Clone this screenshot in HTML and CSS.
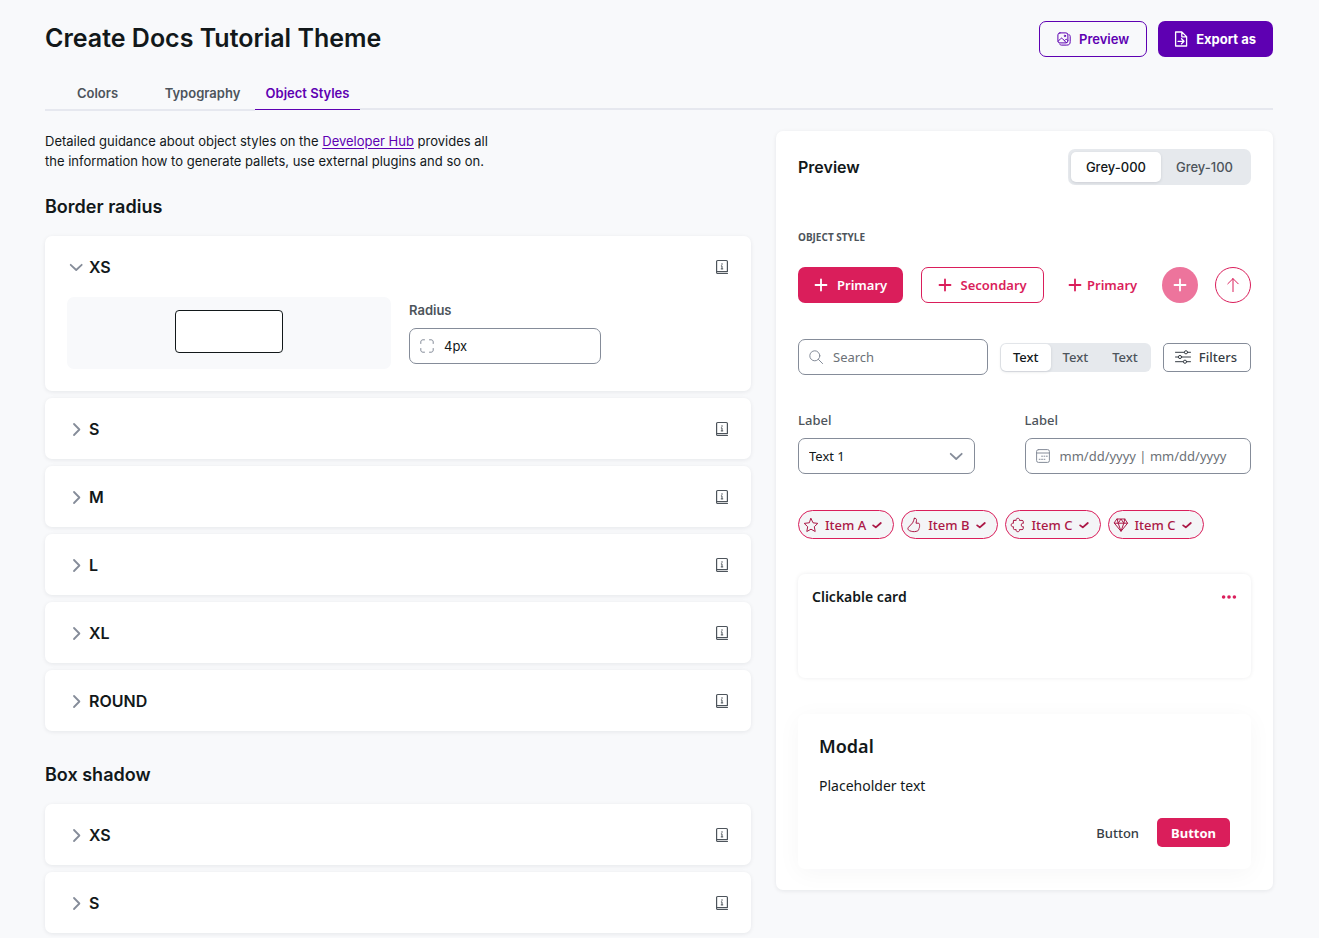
FILE: index.html
```html
<!DOCTYPE html>
<html lang="en">
<head>
<meta charset="utf-8">
<meta name="viewport" content="width=device-width, initial-scale=1">
<title>Create Docs Tutorial Theme</title>
<link rel="stylesheet" href="styles.css">
</head>
<body>
<svg class="sprite" aria-hidden="true">
  <symbol id="chev-right" viewBox="0 0 16 16"><path d="M6 3 11.4 8.5 6 14"/></symbol>
  <symbol id="chev-down" viewBox="0 0 16 16"><path d="M2.7 5.8 8.2 11 13.7 5.8"/></symbol>
  <symbol id="info" viewBox="0 0 18 18"><path d="M3.6 14.4V3.6c0-.7.3-1.1 1.1-1.1h8.6c.8 0 1.1.4 1.1 1.1v9.9M3.6 13.5h10.8M4 15.4h10.4"/><path class="thin" d="M9 5.6v.8M8.3 7.9H9v2.9M8.2 10.9h1.6"/></symbol>
  <symbol id="plus" viewBox="0 0 14 14"><path d="M7 1.5v11M1.5 7h11"/></symbol>
  <symbol id="check" viewBox="0 0 10 8"><path d="M1.2 4.4 3.8 6.4 8.8 2"/></symbol>
</svg>
<div class="page">
  <header class="header">
    <h1 class="title">Create Docs Tutorial Theme</h1>
    <div class="actions">
      <button class="btn btn-outline" type="button">
        <svg class="icon" width="14" height="14" viewBox="0 0 14 14"><rect x=".9" y=".9" width="10" height="10" rx="2"/><path d="M12 2.6c.8.3 1.2.9 1.2 1.8v5.2c0 2.4-1 3.5-3.5 3.5H4.5c-1 0-1.6-.4-1.9-1.1M1.2 9.2l2.6-2.7c.5-.5 1-.5 1.5 0l4 4.2M7.6 8.5l1-.9c.5-.4.9-.4 1.3 0l1 1"/><circle cx="7.9" cy="3.9" r=".7"/></svg>
        Preview
      </button>
      <button class="btn btn-solid" type="button">
        <svg class="icon" width="14" height="16" viewBox="0 0 14 16"><path d="M1.6 1h6.2l4.8 4.6V15h-11zM7.8 1v4.8h4.8M4 10.3h5.8M7.5 7.8l2.5 2.5-2.5 2.5"/></svg>
        Export as
      </button>
    </div>
  </header>

  <div class="tabs" role="tablist">
    <button class="tab" type="button" role="tab" aria-selected="false">Colors</button>
    <button class="tab" type="button" role="tab" aria-selected="false">Typography</button>
    <button class="tab tab-active" type="button" role="tab" aria-selected="true">Object Styles</button>
  </div>

  <main class="layout">
    <div class="settings">
      <p class="intro">Detailed guidance about object styles on the <a href="#">Developer Hub</a> provides all the information how to generate pallets, use external plugins and so on.</p>

      <section class="group">
        <h2 class="group-title">Border radius</h2>
        <div class="stack">
          <article class="panel">
            <div class="panel-head">
              <button class="toggle" type="button" aria-expanded="true"><svg class="icon chevron"><use href="#chev-down"/></svg>XS</button>
              <button class="info" type="button" aria-label="About XS"><svg class="icon"><use href="#info"/></svg></button>
            </div>
            <div class="panel-body">
              <div class="swatch"><div class="swatch-shape"></div></div>
              <div class="field">
                <label class="label" for="radius">Radius</label>
                <div class="input-box radius-box">
                  <svg class="icon" width="14" height="14" viewBox="0 0 14 14"><path d="M.8 4.5V3C.8 1.6 1.6.8 3 .8h1.5M9.5.8H11c1.4 0 2.2.8 2.2 2.2v1.5M13.2 9.5V11c0 1.4-.8 2.2-2.2 2.2H9.5M4.5 13.2H3C1.6 13.2.8 12.4.8 11V9.5"/></svg>
                  <input class="input" id="radius" type="text" value="4px">
                </div>
              </div>
            </div>
          </article>
          <article class="panel"><div class="panel-head">
            <button class="toggle" type="button" aria-expanded="false"><svg class="icon chevron"><use href="#chev-right"/></svg>S</button>
            <button class="info" type="button" aria-label="About S"><svg class="icon"><use href="#info"/></svg></button>
          </div></article>
          <article class="panel"><div class="panel-head">
            <button class="toggle" type="button" aria-expanded="false"><svg class="icon chevron"><use href="#chev-right"/></svg>M</button>
            <button class="info" type="button" aria-label="About M"><svg class="icon"><use href="#info"/></svg></button>
          </div></article>
          <article class="panel"><div class="panel-head">
            <button class="toggle" type="button" aria-expanded="false"><svg class="icon chevron"><use href="#chev-right"/></svg>L</button>
            <button class="info" type="button" aria-label="About L"><svg class="icon"><use href="#info"/></svg></button>
          </div></article>
          <article class="panel"><div class="panel-head">
            <button class="toggle" type="button" aria-expanded="false"><svg class="icon chevron"><use href="#chev-right"/></svg>XL</button>
            <button class="info" type="button" aria-label="About XL"><svg class="icon"><use href="#info"/></svg></button>
          </div></article>
          <article class="panel"><div class="panel-head">
            <button class="toggle" type="button" aria-expanded="false"><svg class="icon chevron"><use href="#chev-right"/></svg>ROUND</button>
            <button class="info" type="button" aria-label="About ROUND"><svg class="icon"><use href="#info"/></svg></button>
          </div></article>
        </div>
      </section>

      <section class="group group-next">
        <h2 class="group-title">Box shadow</h2>
        <div class="stack">
          <article class="panel"><div class="panel-head">
            <button class="toggle" type="button" aria-expanded="false"><svg class="icon chevron"><use href="#chev-right"/></svg>XS</button>
            <button class="info" type="button" aria-label="About XS shadow"><svg class="icon"><use href="#info"/></svg></button>
          </div></article>
          <article class="panel"><div class="panel-head">
            <button class="toggle" type="button" aria-expanded="false"><svg class="icon chevron"><use href="#chev-right"/></svg>S</button>
            <button class="info" type="button" aria-label="About S shadow"><svg class="icon"><use href="#info"/></svg></button>
          </div></article>
        </div>
      </section>
    </div>

    <aside class="preview">
      <div class="preview-head">
        <h2 class="preview-title">Preview</h2>
        <div class="segmented segmented-large">
          <button class="segment segment-on" type="button" aria-pressed="true">Grey-000</button>
          <button class="segment" type="button" aria-pressed="false">Grey-100</button>
        </div>
      </div>

      <div class="sample">
        <h3 class="eyebrow">OBJECT STYLE</h3>

        <div class="row button-row">
          <button class="brand brand-solid" type="button"><svg class="icon plus"><use href="#plus"/></svg>Primary</button>
          <button class="brand brand-outline" type="button"><svg class="icon plus"><use href="#plus"/></svg>Secondary</button>
          <button class="brand brand-text" type="button"><svg class="icon plus"><use href="#plus"/></svg>Primary</button>
          <button class="round round-solid" type="button" aria-label="Add"><svg class="icon plus"><use href="#plus"/></svg></button>
          <button class="round round-outline" type="button" aria-label="Up"><svg class="icon" width="14" height="16" viewBox="0 0 14 16"><path d="M7 14.6V1.6M1.8 6.8 7 1.6 12.2 6.8"/></svg></button>
        </div>

        <div class="row tool-row">
          <div class="input-box search-box">
            <svg class="icon" width="14" height="14" viewBox="0 0 14 14"><circle cx="5.8" cy="5.8" r="5"/><path d="m9.4 9.4 4.2 4.2"/></svg>
            <input class="input" type="search" placeholder="Search" aria-label="Search">
          </div>
          <div class="segmented">
            <button class="segment segment-on" type="button" aria-pressed="true">Text</button>
            <button class="segment" type="button" aria-pressed="false">Text</button>
            <button class="segment" type="button" aria-pressed="false">Text</button>
          </div>
          <button class="filters" type="button">
            <svg class="icon" width="16" height="14" viewBox="0 0 16 14"><path d="M.5 2.3h8.7M12.8 2.3h2.7M.5 7h2.7M6.8 7h8.7M.5 11.7h7.7M11.8 11.7h3.7"/><circle cx="11" cy="2.3" r="1.6"/><circle cx="5" cy="7" r="1.6"/><circle cx="10" cy="11.7" r="1.6"/></svg>
            Filters
          </button>
        </div>

        <div class="row field-row">
          <div class="field select-field">
            <label class="label" for="choice">Label</label>
            <div class="input-box select-box">
              <select class="select" id="choice"><option>Text 1</option><option>Text 2</option></select>
              <svg class="icon chevron select-arrow"><use href="#chev-down"/></svg>
            </div>
          </div>
          <div class="field date-field">
            <label class="label" for="dates">Label</label>
            <div class="input-box">
              <svg class="icon" width="14" height="14" viewBox="0 0 14 14"><rect x=".6" y=".6" width="12.8" height="12.8" rx="1.8"/><path d="M.6 4h12.8M5.6 7.2h.9M8 7.2h.9M10.4 7.2h.9M3.2 10.3h.9M5.6 10.3h.9M8 10.3h.9"/></svg>
              <input class="input" id="dates" type="text" placeholder="mm/dd/yyyy | mm/dd/yyyy">
            </div>
          </div>
        </div>

        <div class="chips">
          <button class="chip" type="button" aria-pressed="true">
            <svg class="icon" width="16" height="16" viewBox="0 0 16 16"><path d="m8 1.5 2 4.3 4.8.6-3.5 3.3.9 4.8L8 12.2l-4.2 2.3.9-4.8L1.2 6.4 6 5.8z"/></svg>
            Item A
            <svg class="icon check"><use href="#check"/></svg>
          </button>
          <button class="chip" type="button" aria-pressed="true">
            <svg class="icon" width="16" height="16" viewBox="0 0 16 16"><path d="M8.3 1.4c1.5-.5 2.4.5 2.2 2L10 6.2h2.2c1.3 0 1.7 1.1 1.1 1.8.5.6.5 1.5-.1 2 .4.7.1 1.5-.5 1.9.2 1-.3 1.7-1.2 2-1.7.8-4.2 1-6.2.4-1.2-.3-2.3-.7-3-1.5-.6-.8-.5-1.6.1-2.4l4.2-4.5c1.1-1.2.9-2.9 1.7-4.5z"/></svg>
            Item B
            <svg class="icon check"><use href="#check"/></svg>
          </button>
          <button class="chip" type="button" aria-pressed="true">
            <svg class="icon" width="16" height="16" viewBox="0 0 16 16"><path d="M4 3.4h2.2c-.4-1.3.4-2.1 1.6-2.1s2 .8 1.6 2.1H12c.9 0 1.3.4 1.3 1.3v1.7c-1.2-.5-2 .3-2 1.6s.8 2.1 2 1.6v1.7c0 .9-.4 1.3-1.3 1.3H9.4c.4 1.3-.4 2.1-1.6 2.1s-2-.8-1.6-2.1H4.7c-.9 0-1.3-.4-1.3-1.3V9.7c-1.4.3-2.2-.5-2.2-1.7s.8-2 2.2-1.7V4c0-.4.2-.6.6-.6z"/></svg>
            Item C
            <svg class="icon check"><use href="#check"/></svg>
          </button>
          <button class="chip" type="button" aria-pressed="true">
            <svg class="icon" width="16" height="16" viewBox="0 0 16 16"><path d="M4.2 2h7.6l2.8 4.2L8 14.3 1.4 6.2zM1.4 6.2h13.2M4.2 2l1 4.2L8 14.3l2.8-8.1 1-4.2M5.2 6.2 8 2l2.8 4.2"/></svg>
            Item C
            <svg class="icon check"><use href="#check"/></svg>
          </button>
        </div>

        <article class="click-card">
          <h3 class="click-title">Clickable card</h3>
          <button class="more" type="button" aria-label="More"><svg width="16" height="6" viewBox="0 0 16 6"><circle cx="2.6" cy="3" r="1.8"/><circle cx="8" cy="3" r="1.8"/><circle cx="13.4" cy="3" r="1.8"/></svg></button>
        </article>

        <section class="modal">
          <h3 class="modal-title">Modal</h3>
          <p class="modal-text">Placeholder text</p>
          <div class="modal-actions">
            <button class="small-btn" type="button">Button</button>
            <button class="small-btn small-solid" type="button">Button</button>
          </div>
        </section>
      </div>
    </aside>
  </main>
</div>
</body>
</html>
```
FILE: styles.css
```css
:root {
  --page: #f8f9fb;
  --ink: #12181a;
  --muted: #4d545b;
  --line: #858c99;
  --track: #e6e9ed;
  --purple: #5e00b2;
  --pink: #da1e5b;
  --wine: #ab1846;
}

*, *::after { box-sizing: border-box; }

body {
  margin: 0;
  background: var(--page);
  color: var(--ink);
  font-family: Inter, "Liberation Sans", sans-serif;
  font-size: 13px;
}

h1, h2, h3, p { margin: 0; }

button, input, select {
  margin: 0;
  padding: 0;
  border: 0;
  background: none;
  color: inherit;
  font: inherit;
}

button { cursor: pointer; }

.sprite { display: none; }

.icon {
  flex: none;
  fill: none;
  stroke: currentColor;
  stroke-width: 1;
  stroke-linecap: round;
  stroke-linejoin: round;
}

.page { padding: 20px 46px 4px 45px; }

.header,
.actions,
.preview-head,
.row,
.chips,
.modal-actions {
  display: flex;
  align-items: center;
}

.header { justify-content: space-between; }

.title {
  font-size: 25px;
  line-height: 37px;
  font-weight: 600;
}

.actions { gap: 11px; }

.btn {
  display: flex;
  align-items: center;
  gap: 8px;
  height: 36px;
  border-radius: 7px;
  font-weight: 600;
}

.btn-outline {
  border: 1px solid var(--purple);
  color: var(--purple);
  padding: 0 17px;
}

.btn-solid {
  background: var(--purple);
  color: #fff;
  font-weight: 700;
  padding: 0 17px 0 16px;
}

.btn-solid .icon { stroke-width: 1.3; }

.tabs {
  display: flex;
  align-items: flex-start;
  margin-top: 20px;
}

.tabs::after {
  content: "";
  flex: 1;
  height: 33px;
  border-bottom: 2px solid #e6e8ef;
}

.tab {
  width: 105px;
  height: 34px;
  border-bottom: 2px solid #e6e8ef;
  color: var(--muted);
  font-weight: 600;
}

.tab-active {
  height: 33px;
  border-bottom: 1px solid var(--purple);
  color: var(--purple);
}

.layout {
  display: grid;
  grid-template-columns: minmax(0, 706fr) minmax(0, 497fr);
  gap: 25px;
  align-items: start;
  margin-top: 20px;
}

.intro {
  max-width: 452px;
  line-height: 20px;
}

.intro a { color: var(--purple); text-underline-offset: 2px; }

.group { margin-top: 23px; }
.group-next { margin-top: 31px; }

.group-title {
  margin-bottom: 16px;
  font-size: 18px;
  line-height: 26px;
  font-weight: 600;
}

.stack { display: grid; gap: 7px; }

.panel,
.preview {
  border-radius: 7px;
  background: #fff;
  box-shadow: 0 1px 4px rgba(16, 24, 40, .08);
}

.panel-head {
  display: flex;
  align-items: center;
  justify-content: space-between;
  height: 61px;
  padding: 0 20px 0 23px;
}

.toggle {
  display: flex;
  align-items: center;
  gap: 5px;
  font-size: 16px;
  font-weight: 600;
}

.chevron {
  width: 16px;
  height: 16px;
  color: var(--line);
  stroke-width: 1.8;
}

.info { display: flex; color: var(--muted); }
.info .icon { width: 18px; height: 18px; stroke-width: 1.2; }
.thin { stroke-width: 1; }

.panel-body {
  display: grid;
  grid-template-columns: 81fr 80fr;
  gap: 18px;
  padding: 0 22px 22px;
}

.swatch {
  display: flex;
  align-items: center;
  justify-content: center;
  height: 72px;
  padding-bottom: 3px;
  border-radius: 7px;
  background: var(--page);
}

.swatch-shape {
  width: 108px;
  height: 43px;
  border: 1px solid var(--ink);
  border-radius: 4px;
  background: #fff;
}

.label {
  display: block;
  margin-bottom: 9px;
  color: var(--muted);
  line-height: 18px;
  font-weight: 600;
}

.panel-body .field { padding-top: 4px; }

.input-box {
  display: flex;
  align-items: center;
  gap: 10px;
  height: 36px;
  padding: 0 10px;
  border: 1px solid var(--line);
  border-radius: 7px;
  background: #fff;
}

.input-box .icon { color: var(--line); }
.input-box .input { min-width: 0; flex: 1; }
.input::placeholder { color: #6c7177; opacity: 1; }
.radius-box { width: 60%; }

.preview { padding: 18px 22px 21px; }

.preview-head { justify-content: space-between; }

.preview-title {
  font-size: 16px;
  line-height: 24px;
  font-weight: 600;
}

.segmented {
  display: flex;
  height: 29px;
  padding: 1px;
  border-radius: 6px;
  background: var(--track);
}

.segment {
  padding: 0 12px;
  border-radius: 5px;
  color: var(--muted);
  font-weight: 500;
}

.segment-on {
  background: #fff;
  color: var(--ink);
  box-shadow: 0 1px 3px rgba(16, 24, 40, .12);
}

.segmented-large {
  height: 36px;
  padding: 3px;
  border-radius: 7px;
}

.segmented-large .segment { padding: 0 15px; }

.sample {
  margin-top: 44px;
  font-family: "Noto Sans", "Open Sans", sans-serif;
}

.eyebrow {
  color: var(--muted);
  font-size: 10px;
  line-height: 16px;
  font-weight: 700;
}

.row { justify-content: space-between; }
.button-row { margin-top: 22px; }
.tool-row { margin-top: 36px; gap: 12px; }
.field-row { margin-top: 36px; }

.brand {
  display: flex;
  align-items: center;
  justify-content: center;
  gap: 9px;
  height: 36px;
  padding: 0 16px;
  border-radius: 7px;
  font-weight: 600;
}

.plus { width: 14px; height: 14px; stroke-width: 1.8; }

.brand-solid { background: var(--pink); color: #fff; }

.brand-outline {
  border: 1px solid var(--pink);
  color: var(--pink);
}

.brand-text { gap: 5px; padding: 0 7px; color: var(--pink); }

.round {
  display: flex;
  align-items: center;
  justify-content: center;
  width: 36px;
  height: 36px;
  border-radius: 50%;
}

.round-solid { background: #ed749c; color: #fff; }
.round-outline { border: 1px solid var(--pink); color: var(--pink); }

.search-box { flex: 1; min-width: 0; }

.filters {
  display: flex;
  align-items: center;
  gap: 8px;
  height: 29px;
  padding: 0 13px 0 11px;
  border: 1px solid var(--line);
  border-radius: 5px;
  color: #363d44;
  font-weight: 500;
}

.select-field { width: 39%; }
.date-field { width: 50%; }
.field-row .label { font-weight: 500; }

.select-box { position: relative; padding: 0; }

.select {
  width: 100%;
  height: 100%;
  padding: 0 34px 0 10px;
  border-radius: 7px;
  appearance: none;
}

.select-arrow {
  position: absolute;
  right: 10px;
  top: 9px;
  pointer-events: none;
}

.chips { gap: 7px; margin-top: 36px; }

.chip {
  display: flex;
  align-items: center;
  gap: 6px;
  height: 29px;
  padding: 0 11px 0 4px;
  border: 1px solid var(--pink);
  border-radius: 15px;
  background: #f4f5f7;
  color: var(--wine);
  font-weight: 500;
}

.check { width: 10px; height: 8px; stroke-width: 1.8; }

.click-card {
  display: flex;
  align-items: flex-start;
  justify-content: space-between;
  min-height: 104px;
  margin-top: 35px;
  padding: 12px 14px;
  border-radius: 7px;
  box-shadow: 0 0 4px rgba(16, 24, 40, .08);
}

.click-title {
  font-size: 14px;
  line-height: 22px;
  font-weight: 600;
}

.more { display: flex; padding: 8px 0; fill: var(--pink); }

.modal {
  margin-top: 36px;
  padding: 19px 21px 22px;
  border-radius: 7px;
  box-shadow: 0 4px 24px rgba(16, 24, 40, .04);
}

.modal-title {
  font-size: 18px;
  line-height: 26px;
  font-weight: 600;
}

.modal-text {
  margin-top: 16px;
  font-size: 14px;
  line-height: 22px;
}

.modal-actions { justify-content: flex-end; gap: 4px; margin-top: 21px; }

.small-btn {
  height: 29px;
  padding: 0 14px;
  border-radius: 5px;
  color: #363d44;
  font-weight: 500;
}

.small-solid { background: var(--pink); color: #fff; font-weight: 700; }
```
